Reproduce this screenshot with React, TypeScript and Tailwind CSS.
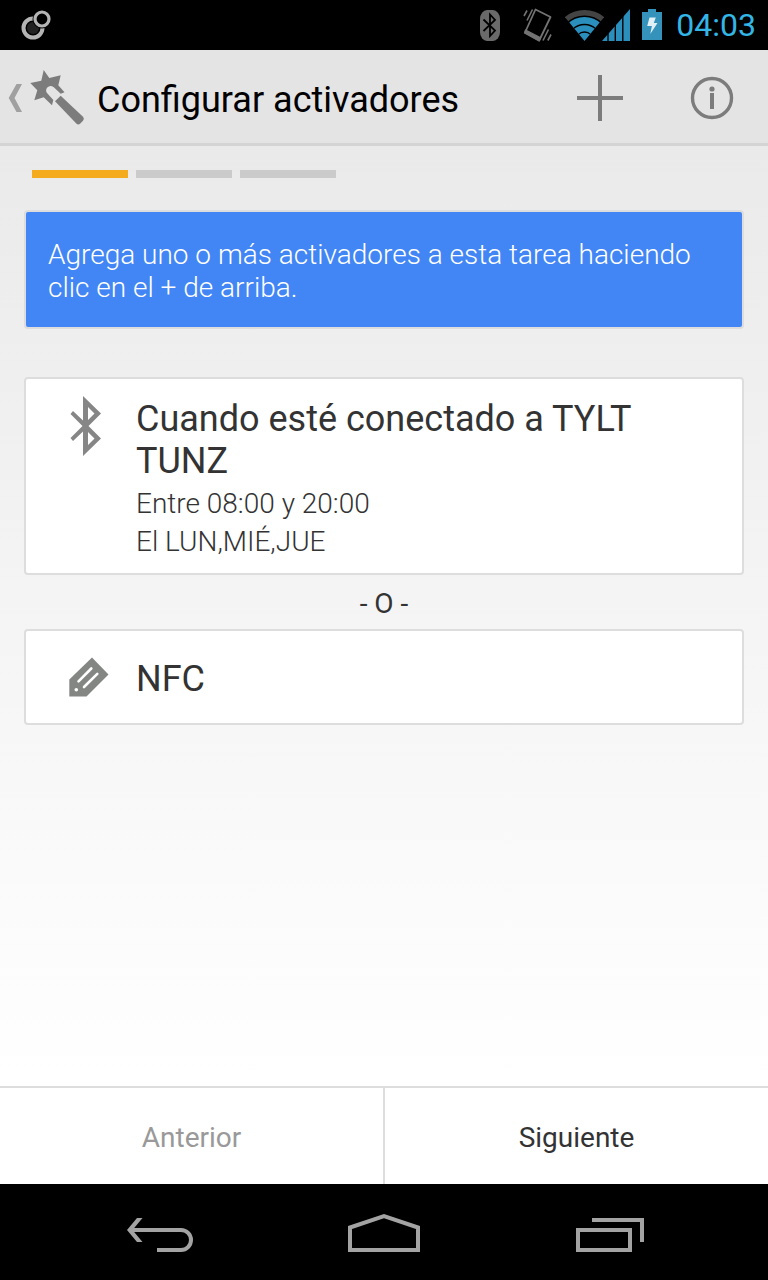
// Task wizard, first step: pick the triggers that start the task.
// Status bar and system nav bar are drawn around the app itself.

import type { ReactNode } from 'react';

interface Trigger {
  id: string;
  title: string;
  details: string[];
  icon: ReactNode;
}

const STEPS = ['Activadores', 'Acciones', 'Resumen'];
const CURRENT_STEP = 0;

const TRIGGERS: Trigger[] = [
  {
    id: 'bluetooth',
    title: 'Cuando esté conectado a TYLT TUNZ',
    details: ['Entre 08:00 y 20:00', 'El LUN,MIÉ,JUE'],
    icon: <BluetoothIcon />,
  },
  { id: 'nfc', title: 'NFC', details: [], icon: <TagIcon /> },
];

export default function App() {
  return (
    <div className="flex min-h-screen flex-col bg-black font-['Roboto','Noto_Sans',sans-serif] text-[#333333]">
      <StatusBar />
      <ActionBar />
      <main className="flex grow flex-col bg-linear-to-b from-[#eaeaea] to-white px-6 pt-6">
        <StepIndicator />
        <p className="mt-8 rounded border-2 border-[#dddddd] bg-[#4286f5] px-[22px] pt-[26px] pb-[23px] text-[28px] leading-[33px] font-light text-white">
          Agrega uno o más activadores a esta tarea haciendo clic en el + de arriba.
        </p>
        <ul className="mt-12">
          {TRIGGERS.map((t, i) => (
            <li key={t.id}>
              {i > 0 && <p className="pt-[13px] pb-[9px] text-center text-[28px] leading-8">- O -</p>}
              <TriggerCard trigger={t} />
            </li>
          ))}
        </ul>
      </main>
      <WizardButtons />
      <SystemNav />
    </div>
  );
}

function StatusBar() {
  return (
    <div className="flex h-[50px] shrink-0 items-center bg-black pr-3 pl-5">
      <svg className="h-8 w-8" viewBox="0 0 32 32" fill="none" aria-hidden="true">
        <circle cx="13" cy="19" r="9.5" stroke="#b4b4b4" strokeWidth="4" />
        <circle cx="13" cy="19" r="6" fill="#222222" />
        <circle cx="22" cy="10" r="8" fill="black" stroke="black" strokeWidth="3" />
        <circle cx="22" cy="10" r="7" stroke="#b4b4b4" strokeWidth="3.2" />
      </svg>
      <div className="ml-auto flex items-center">
        <svg className="mr-[23px] h-8 w-5" viewBox="0 0 20 32" aria-hidden="true">
          <rect y="1" width="20" height="31" rx="7" ry="9" fill="#6a6a6a" />
          <path d="M3.5 10.5 15 21.5 10 27V5.5L15 11 3.5 22" fill="none" stroke="black" strokeWidth="1.8" />
        </svg>
        <svg className="mr-3 h-9 w-[30px]" viewBox="0 0 30 36" fill="none" stroke="#737373" aria-hidden="true">
          <path d="M12.5 2.5 27.5 10 16.2 33.5 2 25.5Z" strokeWidth="1.8" strokeLinejoin="round" />
          <path d="M2.6 23 17.6 30.8 16.2 33.8 1.6 25.8Z" fill="#737373" strokeWidth="1.4" strokeLinejoin="round" />
          <path d="M1 9 4 3.5M4 13.5 9.5 2.5M20 33.5 25.5 22.5M24.8 33.5 28 27.5" strokeWidth="1.6" />
        </svg>
        <WifiIcon />
        <svg className="mr-3 -ml-0.5 h-8 w-7" viewBox="0 0 28 32" aria-hidden="true">
          <path d="M0 32 28 0V32Z" fill="#2a8fbd" />
          <path d="M6 20V32M13.3 14V32M20.8 6V32" stroke="black" strokeWidth="1.4" />
        </svg>
        <svg className="mr-3.5 h-8 w-5" viewBox="0 0 20 32" aria-hidden="true">
          <path d="M6 0h8v3h6v28H0V3h6Z" fill="#3593bb" />
          <path d="M7.5 8.5h6.3l-2 5.5h3.7L8.3 25l1.6-8H5.2Z" fill="#e2eff5" />
        </svg>
        <span className="text-[32px] leading-[50px] text-[#33b5e5]">04:03</span>
      </div>
    </div>
  );
}

function WifiIcon() {
  return (
    <svg className="h-8 w-[39px]" viewBox="0 0 39 32" fill="none" aria-hidden="true">
      <defs>
        <clipPath id="wifi-fan">
          <path d="M19.5 32-6 1V-4H45V1Z" />
        </clipPath>
      </defs>
      <g clipPath="url(#wifi-fan)">
        <circle cx="19.5" cy="32" r="28.2" stroke="#444444" strokeWidth="5.4" />
        <circle cx="19.5" cy="32" r="24" fill="#2a8fbd" />
        <circle cx="19.5" cy="32" r="16.5" stroke="black" strokeWidth="1.3" />
        <circle cx="19.5" cy="32" r="9" stroke="black" strokeWidth="1.3" />
      </g>
    </svg>
  );
}

function ActionBar() {
  return (
    <header className="flex h-24 shrink-0 items-center border-b-[3px] border-[#d4d4d4] bg-[#e4e4e4] pt-0.5">
      <button type="button" aria-label="Volver" className="flex h-full items-center pl-2">
        <svg className="h-7 w-[14px]" viewBox="0 0 14 28" aria-hidden="true">
          <path d="M8.5 0H14L6.5 14 14 28H8.5L.7 14Z" fill="#a0a0a0" />
        </svg>
        <svg className="ml-[7px] h-14 w-14" viewBox="0 0 56 56" fill="#7c7c7c" aria-hidden="true">
          <path d="M14.7 0 20.3 8 31.7 5.3 29.3 15.3 35.5 22.3 31.7 23.7 24.8 17.2Q21 14.5 18.3 17.5 16.2 20 17.8 22.8L24.3 30 23 35.3 14.7 27.3 5.3 30.3 8.3 20.3 1.3 13 12.3 10.7Z" />
          <path d="M26 31.3 31.7 25.7 54 46.8Q55.8 48.7 54 50.8L51.3 53.5Q49.3 55.5 47.3 53.5Z" />
        </svg>
      </button>
      <h1 className="ml-3 pt-1 text-[36px] leading-[42px] whitespace-nowrap text-black">Configurar activadores</h1>
      <div className="ml-auto flex h-full">
        <button type="button" aria-label="Agregar activador" className="flex w-28 items-center justify-center">
          <svg className="h-[46px] w-[46px]" viewBox="0 0 46 46" fill="#7c7c7c" aria-hidden="true">
            <path d="M21 0h4v21h21v4H25v21h-4V25H0v-4h21Z" />
          </svg>
        </button>
        <button type="button" aria-label="Información" className="flex w-28 items-center justify-center">
          <svg className="h-11 w-11" viewBox="0 0 44 44" fill="#7c7c7c" aria-hidden="true">
            <circle cx="22" cy="22" r="19.5" fill="none" stroke="#7c7c7c" strokeWidth="3.4" />
            <circle cx="22" cy="13" r="2.6" />
            <path d="M20 17h4v16h-4Z" />
          </svg>
        </button>
      </div>
    </header>
  );
}

function StepIndicator() {
  return (
    <ol className="flex gap-2 pl-2">
      {STEPS.map((step, i) => (
        <li
          key={step}
          aria-label={step}
          className={i === CURRENT_STEP ? 'h-2 w-24 bg-[#f4ab1e]' : 'h-2 w-24 bg-[#cbcbcb]'}
        />
      ))}
    </ol>
  );
}

function TriggerCard({ trigger }: { trigger: Trigger }) {
  const { title, details, icon } = trigger;
  // a card with a title only gets more air above and below it
  const padding = details.length > 0 ? 'pt-[17px] pb-3' : 'pt-[25px] pb-[23px]';
  return (
    <button
      type="button"
      className={`flex w-full items-start rounded border-2 border-[#dddddd] bg-white pr-6 pl-10 text-left ${padding}`}
    >
      <span className="flex w-[70px] shrink-0 pl-1">{icon}</span>
      <span className="flex flex-col pt-0.5">
        <span className="text-[36px] leading-[42px]">{title}</span>
        {details.length > 0 && (
          <span className="flex flex-col pt-[3px] text-[28px] leading-[38px] font-light">
            {details.map((line) => (
              <span key={line}>{line}</span>
            ))}
          </span>
        )}
      </span>
    </button>
  );
}

function BluetoothIcon() {
  return (
    <svg className="h-[60px] w-8" viewBox="0 0 32 60" fill="#868686" aria-hidden="true">
      <path
        fillRule="evenodd"
        d="M13 0 31 17.5 18.5 30 31 42.5 13 60V35.5L3 45 .5 42 12.5 30 .5 18 3 15 13 24.5ZM18 11V24l6.5-6.5ZM18 36V49l6.5-6.5Z"
      />
    </svg>
  );
}

function TagIcon() {
  return (
    <svg className="h-10 w-10 overflow-visible" viewBox="1 -1 40 40" aria-hidden="true">
      <path d="M23 .5 39.5 17.5 17.5 39.5H.3V22.5Z" fill="#848684" />
      <path d="M9.5 24.3 22.3 11.5M15 30 28.3 16.8" stroke="white" strokeWidth="2.6" strokeLinecap="round" />
      <circle cx="7.3" cy="32.7" r="1.8" fill="white" />
    </svg>
  );
}

function WizardButtons() {
  return (
    <div className="grid shrink-0 grid-cols-2 gap-x-0.5 border-t-2 border-[#dddddd] bg-[#dddddd] text-[28px] leading-8">
      <button type="button" disabled className="h-24 bg-white pt-1 text-[#999999]">
        Anterior
      </button>
      <button type="button" className="h-24 bg-white pt-1">
        Siguiente
      </button>
    </div>
  );
}

function SystemNav() {
  return (
    <nav className="grid h-24 shrink-0 grid-cols-3 bg-black px-12">
      <button type="button" aria-label="Atrás" className="flex items-center justify-center">
        <svg className="h-10 w-[68px]" viewBox="0 0 68 40" fill="none" aria-hidden="true">
          <path d="M6 18H55a9 9 0 0 1 0 20H31" stroke="#a3a3a3" strokeWidth="4" />
          <path d="M11 6h5.5L6.5 18 16.5 30H11L1 18Z" fill="#a3a3a3" />
        </svg>
      </button>
      <button type="button" aria-label="Inicio" className="flex items-center justify-center">
        <svg className="h-10 w-[72px]" viewBox="0 0 72 40" fill="none" aria-hidden="true">
          <path d="M2 38V15.5L36 4.2 70 15.5V38Z" stroke="#a3a3a3" strokeWidth="4" />
        </svg>
      </button>
      <button type="button" aria-label="Recientes" className="flex items-center justify-center">
        <svg className="h-10 w-[72px]" viewBox="0 0 72 40" fill="none" aria-hidden="true">
          <path d="M6 18H58V38H6ZM20 8H70V30" stroke="#a3a3a3" strokeWidth="4" />
        </svg>
      </button>
    </nav>
  );
}
